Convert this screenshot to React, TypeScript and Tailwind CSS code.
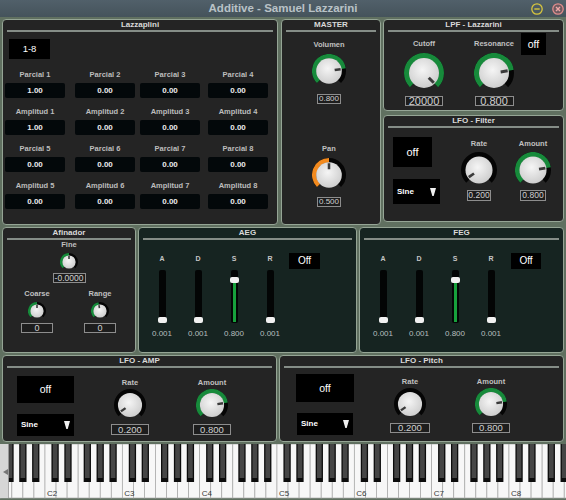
import { useId, type ReactNode } from 'react';

type KnobProps = {
  size: number;
  angle: number;
  arcTo?: number;
  color?: string;
  className?: string;
};

// rotary knob: black 270deg track, coloured value arc, light disc and pointer
const Knob = ({ size, angle, arcTo, color = '#178a3b', className = '' }: KnobProps) => {
  const gid = 'k' + useId().replace(/[^a-zA-Z0-9]/g, '');
  const c = size / 2;
  const t = Math.max(size * 0.135, 2.8);
  const rr = c - t / 2;
  const rd = c - t + 0.4;
  const pt = (a: number, r: number) => {
    const rad = (a * Math.PI) / 180;
    return [c + r * Math.sin(rad), c - r * Math.cos(rad)];
  };
  const arc = (a0: number, a1: number) => {
    const [x0, y0] = pt(a0, rr);
    const [x1, y1] = pt(a1, rr);
    return `M${x0} ${y0} A${rr} ${rr} 0 ${a1 - a0 > 180 ? 1 : 0} 1 ${x1} ${y1}`;
  };
  const [ix0, iy0] = pt(angle, rd * 0.45);
  const [ix1, iy1] = pt(angle, rd * 0.92);
  return (
    <svg width={size} height={size} viewBox={`0 0 ${size} ${size}`} className={`block ${className}`}>
      <defs>
        <radialGradient id={gid} cx="45%" cy="40%" r="62%">
          <stop offset="0%" stopColor="#f5f5f5" />
          <stop offset="100%" stopColor="#cdcdcd" />
        </radialGradient>
      </defs>
      <path d={arc(-135, 135)} stroke="#050505" strokeWidth={t} fill="none" />
      {arcTo !== undefined && <path d={arc(-135, arcTo)} stroke={color} strokeWidth={t} fill="none" />}
      <circle cx={c} cy={c} r={rd} fill={`url(#${gid})`} />
      <line x1={ix0} y1={iy0} x2={ix1} y2={iy1} stroke="#3a3a3a" strokeWidth={Math.max(size * 0.075, 1.6)} />
    </svg>
  );
};

const Panel = ({
  title,
  teal = false,
  className = '',
  children,
}: {
  title: string;
  teal?: boolean;
  className?: string;
  children?: ReactNode;
}) => (
  <div
    className={`flex flex-col overflow-hidden rounded-[4px] border border-[#95a595] ${teal ? 'bg-[#162421]' : 'bg-[#242424]'} ${className}`}
  >
    <div className="mx-[4px] border-b-2 border-[#858d87] text-center text-[8px] font-bold leading-[10px] text-[#d9d9d9]">
      {title}
    </div>
    {children}
  </div>
);

const Label = ({ children, className = '' }: { children: ReactNode; className?: string }) => (
  <div className={`whitespace-nowrap text-[7.5px] font-bold leading-[10px] text-[#c0c0c0] ${className}`}>{children}</div>
);

const ValueBox = ({ children, className = '' }: { children: ReactNode; className?: string }) => (
  <div
    className={`flex items-center justify-center border border-[#8d8d8d] bg-[#1d1d1d] leading-none text-[#d0d0d0] ${className}`}
  >
    {children}
  </div>
);

const OffBox = ({ children, className = '' }: { children: ReactNode; className?: string }) => (
  <div className={`flex items-center justify-center bg-black leading-none text-white ${className}`}>{children}</div>
);

const SineBox = ({ className = '' }: { className?: string }) => (
  <div className={`flex items-center justify-between bg-black pl-[4px] pr-[4px] ${className}`}>
    <span className="text-[8px] font-bold leading-none text-white">Sine</span>
    <svg width="6" height="8" viewBox="0 0 6 8" className="block">
      <polygon points="0,0 6,0 3.7,8 2.3,8" fill="#f0f0f0" />
    </svg>
  </div>
);

const Fader = ({ label, value, top, fill = false }: { label: string; value: string; top: string; fill?: boolean }) => (
  <div className="flex w-[20px] flex-col items-center">
    <div className="mt-[14px] text-[7px] font-bold leading-[10px] text-[#c6c6c6]">{label}</div>
    <div className="relative mt-[6px] h-[53px] w-[7px] rounded-[2px] bg-[#030505]">
      {fill && <div className="absolute bottom-[1px] left-[2px] top-[13px] w-[3px] bg-[#17a03c]" />}
      <div className={`absolute left-[-1px] h-[6px] w-[9px] rounded-[2px] bg-[#f1f1f1] ${top}`} />
    </div>
    <div className="mt-[6px] whitespace-nowrap text-[8px] leading-[10px] text-[#b6bebe]">{value}</div>
  </div>
);

const envelope = [
  { label: 'A', value: '0.001', top: 'top-[47px]' },
  { label: 'D', value: '0.001', top: 'top-[47px]' },
  { label: 'S', value: '0.800', top: 'top-[7px]', fill: true },
  { label: 'R', value: '0.001', top: 'top-[47px]' },
];

const cells = [
  ['Parcial 1', '1.00'],
  ['Parcial 2', '0.00'],
  ['Parcial 3', '0.00'],
  ['Parcial 4', '0.00'],
  ['Amplitud 1', '1.00'],
  ['Amplitud 2', '0.00'],
  ['Amplitud 3', '0.00'],
  ['Amplitud 4', '0.00'],
  ['Parcial 5', '0.00'],
  ['Parcial 6', '0.00'],
  ['Parcial 7', '0.00'],
  ['Parcial 8', '0.00'],
  ['Amplitud 5', '0.00'],
  ['Amplitud 6', '0.00'],
  ['Amplitud 7', '0.00'],
  ['Amplitud 8', '0.00'],
];

const Keyboard = () => {
  const oct = 77.33;
  const kw = oct / 7;
  const c2 = 45;
  const whites: number[] = [];
  for (let j = -5; c2 + j * kw < 566; j++) whites.push(c2 + j * kw);
  const blacks: number[] = [];
  for (let o = -1; o <= 7; o++) {
    for (const i of [1, 3, 6, 8, 10]) {
      const x = c2 + o * oct + (i * oct) / 12;
      if (x < 566) blacks.push(x);
    }
  }
  return (
    <svg width={566} height={56} viewBox="0 0 566 56" className="block">
      {whites.map((x) => (
        <rect key={x} x={x} y={0} width={kw} height={54} fill="#f7f7f7" stroke="#a9a9a9" strokeWidth={0.7} />
      ))}
      {blacks.map((x) => (
        <g key={x}>
          <rect x={x} y={0} width={7.3} height={38} fill="#0c0c0c" />
          <rect x={x + 1.3} y={0} width={4.7} height={34} fill="#454545" />
        </g>
      ))}
      {[0, 1, 2, 3, 4, 5, 6].map((o) => (
        <text
          key={o}
          x={c2 + o * oct + 2}
          y={51.5}
          fontSize={8}
          fill="#3a3a3a"
          fontFamily="'Liberation Sans', Arial, sans-serif"
        >
          {`C${o + 2}`}
        </text>
      ))}
      <rect x={0} y={0} width={8.5} height={54} fill="#d6d6d6" />
      <line x1={8.5} y1={0} x2={8.5} y2={54} stroke="#9a9a9a" strokeWidth={0.8} />
      <polygon points="3,28 8,25 8,31" fill="#767676" />
    </svg>
  );
};

const App = () => {
  return (
    <div className="h-[500px] w-[566px] overflow-hidden bg-[#607060] font-['Liberation_Sans',Arial,sans-serif]">
      <div className="grid h-[17px] grid-cols-[1fr_auto_1fr] items-center bg-[linear-gradient(#51606a,#45535b)]">
        <div />
        <span className="text-[11.5px] font-bold leading-none text-[#b9c2c7]">Additive - Samuel Lazzarini</span>
        <div className="flex justify-end gap-[9px] pr-[2px]">
          <svg width="12" height="12" viewBox="0 0 12 12" className="block">
            <circle cx="6" cy="6" r="5.2" fill="none" stroke="#d8c63e" strokeWidth="1.3" />
            <line x1="3.3" y1="6" x2="8.7" y2="6" stroke="#d8c63e" strokeWidth="1.4" />
          </svg>
          <svg width="12" height="12" viewBox="0 0 12 12" className="block">
            <circle cx="6" cy="6" r="5.2" fill="#6e5a60" stroke="#e08c8c" strokeWidth="1.3" />
            <path d="M4 4 L8 8 M8 4 L4 8" stroke="#f0a8a8" strokeWidth="1.4" />
          </svg>
        </div>
      </div>

      <div className="flex flex-col gap-[2px] px-[2px] pt-[2px]">
        {/* top row */}
        <div className="flex h-[206px]">
          <Panel title="Lazzaplini" className="w-[276px]">
            <OffBox className="ml-[6px] mt-[7px] h-[20px] w-[41px] text-[9.5px]">1-8</OffBox>
            <div className="mt-[10px] grid grid-cols-[70px_65px_68px_60px] gap-y-[8px] pl-[2px]">
              {cells.map(([label, value]) => (
                <div key={label} className="flex w-[60px] flex-col items-center">
                  <div className="whitespace-nowrap text-[7.5px] font-bold leading-[12px] text-[#bdbdbd]">{label}</div>
                  <div className="mt-[2px] flex h-[15px] w-[60px] items-center justify-center rounded-[2px] bg-[#03080a] text-[8px] font-bold leading-none text-[#ececec]">
                    {value}
                  </div>
                </div>
              ))}
            </div>
          </Panel>

          <Panel title="MASTER" className="ml-[3px] w-[100px]">
            <div className="flex flex-col items-center pr-[4px]">
              <Label className="mt-[8px]">Volumen</Label>
              <Knob className="mt-[4px]" size={34} angle={81} arcTo={81} />
              <ValueBox className="mt-[6px] h-[10px] w-[24px] text-[8px]">0.800</ValueBox>
              <Label className="mt-[40px]">Pan</Label>
              <Knob className="mt-[4px]" size={34} angle={0} arcTo={0} color="#f28a1e" />
              <ValueBox className="mt-[5px] h-[10px] w-[24px] text-[8px]">0.500</ValueBox>
            </div>
          </Panel>

          <div className="ml-[2px] flex w-[181px] flex-col gap-[4px]">
            <Panel title="LPF - Lazzarini" className="h-[92px]">
              <div className="flex items-start">
                <div className="ml-[18px] flex w-[44px] flex-col items-center">
                  <Label className="mt-[7px]">Cutoff</Label>
                  <Knob className="mt-[4px]" size={40} angle={135} arcTo={135} />
                  <ValueBox className="mt-[3px] h-[10px] w-[38px] text-[11px]">20000</ValueBox>
                </div>
                <div className="ml-[26px] flex w-[44px] flex-col items-center">
                  <Label className="mt-[7px]">Resonance</Label>
                  <Knob className="mt-[4px]" size={40} angle={81} arcTo={81} />
                  <ValueBox className="mt-[3px] h-[10px] w-[39px] text-[11px]">0.800</ValueBox>
                </div>
                <OffBox className="ml-[5px] mt-[1px] h-[22px] w-[25px] text-[10.5px]">off</OffBox>
              </div>
            </Panel>

            <Panel title="LFO - Filter" className="h-[107px]">
              <div className="flex items-start">
                <div className="ml-[9px] flex w-[47px] flex-col">
                  <OffBox className="mt-[9px] h-[30px] w-[39px] text-[11px]">off</OffBox>
                  <SineBox className="mt-[12px] h-[25px] w-[47px]" />
                </div>
                <div className="ml-[19px] flex w-[40px] flex-col items-center">
                  <Label className="mt-[11px]">Rate</Label>
                  <Knob className="mt-[3px]" size={36} angle={-125} />
                  <ValueBox className="mt-[2px] h-[11px] w-[24px] text-[8.5px]">0.200</ValueBox>
                </div>
                <div className="ml-[14px] flex w-[40px] flex-col items-center">
                  <Label className="mt-[11px]">Amount</Label>
                  <Knob className="mt-[3px]" size={36} angle={81} arcTo={81} />
                  <ValueBox className="mt-[2px] h-[11px] w-[26px] text-[8.5px]">0.800</ValueBox>
                </div>
              </div>
            </Panel>
          </div>
        </div>

        {/* middle row */}
        <div className="flex h-[126px]">
          <Panel title="Afinador" className="w-[134px]">
            <div className="flex flex-col items-center">
              <Label>Fine</Label>
              <Knob className="mt-[3px]" size={18} angle={0} arcTo={0} />
              <ValueBox className="mt-[2px] h-[10px] w-[33px] text-[8.5px]">-0.0000</ValueBox>
            </div>
            <div className="flex">
              <div className="ml-[14px] flex w-[40px] flex-col items-center">
                <Label className="mt-[6px]">Coarse</Label>
                <Knob className="mt-[3px]" size={18} angle={0} arcTo={0} />
                <ValueBox className="mt-[3px] h-[10px] w-[32px] text-[9px]">0</ValueBox>
              </div>
              <div className="ml-[23px] flex w-[40px] flex-col items-center">
                <Label className="mt-[6px]">Range</Label>
                <Knob className="mt-[3px]" size={18} angle={-10} arcTo={-10} />
                <ValueBox className="mt-[3px] h-[10px] w-[32px] text-[9px]">0</ValueBox>
              </div>
            </div>
          </Panel>

          <Panel title="AEG" teal className="ml-[2px] w-[219px]">
            <div className="flex items-start">
              <div className="ml-[13px] flex gap-[16px]">
                {envelope.map((f) => (
                  <Fader key={f.label} {...f} />
                ))}
              </div>
              <OffBox className="ml-[9px] mt-[13px] h-[16px] w-[31px] text-[10px]">Off</OffBox>
            </div>
          </Panel>

          <Panel title="FEG" teal className="ml-[2px] w-[205px]">
            <div className="flex items-start">
              <div className="ml-[13px] flex gap-[16px]">
                {envelope.map((f) => (
                  <Fader key={f.label} {...f} />
                ))}
              </div>
              <OffBox className="ml-[10px] mt-[13px] h-[16px] w-[30px] text-[10px]">Off</OffBox>
            </div>
          </Panel>
        </div>

        {/* lfo row */}
        <div className="flex h-[87px]">
          <Panel title="LFO - AMP" className="w-[275px]">
            <div className="flex items-start">
              <div className="ml-[14px] flex flex-col">
                <OffBox className="mt-[8px] h-[27px] w-[57px] text-[10.5px]">off</OffBox>
                <SineBox className="mt-[11px] h-[22px] w-[57px]" />
              </div>
              <div className="ml-[36px] flex w-[40px] flex-col items-center">
                <Label className="mt-[10px]">Rate</Label>
                <Knob className="mt-[1px]" size={32} angle={-125} />
                <ValueBox className="mt-[3px] h-[11px] w-[38px] text-[9.5px]">0.200</ValueBox>
              </div>
              <div className="ml-[42px] flex w-[40px] flex-col items-center">
                <Label className="mt-[10px]">Amount</Label>
                <Knob className="mt-[1px]" size={32} angle={81} arcTo={81} />
                <ValueBox className="mt-[3px] h-[11px] w-[38px] text-[9.5px]">0.800</ValueBox>
              </div>
            </div>
          </Panel>

          <Panel title="LFO - Pitch" className="ml-[2px] w-[285px]">
            <div className="flex items-start">
              <div className="ml-[16px] flex w-[58px] flex-col">
                <OffBox className="mt-[6px] h-[28px] w-[58px] text-[10.5px]">off</OffBox>
                <SineBox className="ml-[1px] mt-[11px] h-[22px] w-[56px]" />
              </div>
              <div className="ml-[36px] flex w-[40px] flex-col items-center">
                <Label className="mt-[9px]">Rate</Label>
                <Knob className="mt-[1px]" size={32} angle={-125} />
                <ValueBox className="mt-[3px] h-[10px] w-[40px] text-[9.5px]">0.200</ValueBox>
              </div>
              <div className="ml-[41px] flex w-[40px] flex-col items-center">
                <Label className="mt-[9px]">Amount</Label>
                <Knob className="mt-[1px]" size={32} angle={81} arcTo={81} />
                <ValueBox className="mt-[3px] h-[10px] w-[38px] text-[9.5px]">0.800</ValueBox>
              </div>
            </div>
          </Panel>
        </div>
      </div>

      <div className="mt-[2px]">
        <Keyboard />
      </div>
    </div>
  );
};

export default App;
